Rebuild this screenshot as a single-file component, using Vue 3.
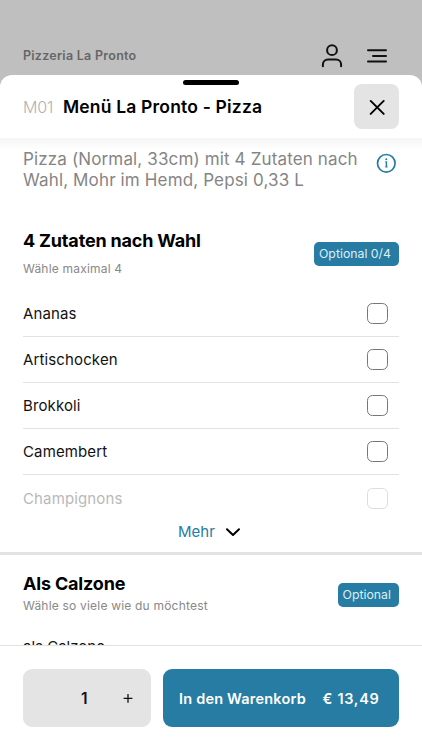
<script setup>
const toppings = [
  { name: 'Ananas' },
  { name: 'Artischocken' },
  { name: 'Brokkoli' },
  { name: 'Camembert' },
  { name: 'Champignons', faded: true },
]
</script>

<template>
  <div class="screen">
    <header class="topbar">
      <span class="shop">Pizzeria La Pronto</span>
      <svg class="user" width="22" height="24" viewBox="0 0 22 24" fill="none" stroke="#111" stroke-width="2" stroke-linecap="round">
        <circle cx="11" cy="6.2" r="4.9" />
        <path d="M1.9 22.2v-1.8a5 5 0 0 1 5-5h8.2a5 5 0 0 1 5 5v1.8" />
      </svg>
      <svg class="menu" width="22" height="16" viewBox="0 0 22 16" fill="none" stroke="#111" stroke-width="2" stroke-linecap="round">
        <path d="M2 2.3h18M7 7.9h13M2 13.5h18" />
      </svg>
    </header>

    <section class="sheet">
      <div class="handle"></div>
      <div class="sheet-head">
        <span class="code">M01</span>
        <h1>Menü La Pronto - Pizza</h1>
        <button class="close" aria-label="Schließen">
          <svg width="16" height="16" viewBox="0 0 16 16" fill="none" stroke="#000" stroke-width="1.9" stroke-linecap="round">
            <path d="M1.7 1.9l13 13M14.7 1.9l-13 13" />
          </svg>
        </button>
      </div>

      <div class="content">
        <div class="intro">
          <p>Pizza (Normal, 33cm) mit 4 Zutaten nach<br />Wahl, Mohr im Hemd, Pepsi 0,33 L</p>
          <svg width="20" height="20" viewBox="0 0 20 20" fill="none" stroke="#267ca3" stroke-width="1.7">
            <circle cx="10.3" cy="10.3" r="8.8" />
            <path d="M10.4 8.4v5.8" stroke-width="1.5" />
            <path d="M9 8.8h1.4M8.9 14h3" stroke-width="0.7" />
            <circle cx="10.3" cy="6.3" r="1" fill="#267ca3" stroke="none" />
          </svg>
        </div>

        <div class="group first">
          <div>
            <h2>4 Zutaten nach Wahl</h2>
            <p class="hint">Wähle maximal 4</p>
          </div>
          <span class="badge">Optional 0/4</span>
        </div>

        <ul>
          <li v-for="t in toppings" :key="t.name" :class="{ faded: t.faded }">
            <span>{{ t.name }}</span>
            <i class="box"></i>
          </li>
        </ul>

        <div class="more">
          <span>Mehr</span>
          <svg width="16" height="10" viewBox="0 0 16 10" fill="none" stroke="#000" stroke-width="2" stroke-linecap="round" stroke-linejoin="round">
            <path d="M2 2.2l6 5.8 6-5.8" />
          </svg>
        </div>

        <div class="group second">
          <div>
            <h2>Als Calzone</h2>
            <p class="hint">Wähle so viele wie du möchtest</p>
          </div>
          <span class="badge">Optional</span>
        </div>
        <div class="cut">als Calzone</div>
      </div>

      <footer>
        <div class="qty"><b>1</b>
          <svg width="10" height="10" viewBox="0 0 10 10" stroke="#111" stroke-width="1.3"><path d="M5 1v8.8M.6 5.4h8.8" /></svg>
        </div>
        <button class="cart"><span>In den Warenkorb</span><span class="price">€ 13,49</span></button>
      </footer>
    </section>
  </div>
</template>

<style>
body {
  background: #bfbfbf;
}
</style>

<style scoped>
* {
  box-sizing: border-box;
}
h1, h2, p, ul {
  margin: 0;
  padding: 0;
}
button {
  border: 0;
  padding: 0;
  font: inherit;
}
svg {
  display: block;
  flex: none;
}
.screen {
  height: 750px;
  display: flex;
  flex-direction: column;
  overflow: hidden;
  background: #bfbfbf;
  font-family: Inter, sans-serif;
  color: #111;
  white-space: nowrap;
}
.topbar {
  height: 75px;
  flex: none;
  display: flex;
  align-items: center;
  padding: 37px 34px 0 23px;
}
.shop {
  font-size: 12.5px;
  font-weight: 600;
  letter-spacing: 0.27px;
  color: #666;
  margin: -2px auto 0 0;
}
.user {
  margin-right: 23px;
}
.sheet {
  flex: 1;
  min-height: 0;
  display: flex;
  flex-direction: column;
  background: #fff;
  border-radius: 12px 12px 0 0;
}
.handle {
  width: 56px;
  height: 5px;
  margin: 5px auto -10px;
  flex: none;
  border-radius: 3px;
  background: #000;
}
.sheet-head {
  height: 63px;
  flex: none;
  display: flex;
  align-items: center;
  padding: 0 23px;
}
.code {
  width: 40px;
  font-size: 16px;
  font-weight: 300;
  letter-spacing: -0.1px;
  color: #b0b0b0;
}
h1 {
  font-size: 17.5px;
  font-weight: 600;
  letter-spacing: 0.18px;
  color: #000;
}
.close {
  width: 45px;
  height: 45px;
  margin-left: auto;
  display: grid;
  place-items: center;
  border-radius: 8px;
  background: #e4e4e4;
}
.content {
  flex: 1;
  min-height: 0;
  overflow: hidden;
  background: linear-gradient(#f5f5f5, #fff 12px);
}
.intro {
  display: flex;
  justify-content: space-between;
  height: 82px;
  padding: 11px 26px 0 23px;
}
.intro p {
  font-size: 17px;
  line-height: 20.5px;
  letter-spacing: 0.14px;
  color: #858585;
}
.intro svg {
  margin-top: 4px;
}
.group {
  display: flex;
  justify-content: space-between;
  padding: 0 23px;
}
.first {
  height: 71px;
  padding-top: 9px;
}
h2 {
  font-size: 18px;
  line-height: 24px;
  font-weight: 700;
  letter-spacing: -0.18px;
  color: #000;
}
.hint {
  font-size: 12px;
  line-height: 16px;
  letter-spacing: 0.2px;
  color: #888;
}
.first .hint {
  margin-top: 8px;
}
.badge {
  height: 24px;
  padding: 0 8px 0 5px;
  border-radius: 5px;
  background: #267ca3;
  color: #dceef6;
  font-size: 12.3px;
  line-height: 24px;
}
.first .badge {
  margin-top: 13px;
}
ul {
  list-style: none;
  padding: 0 23px;
}
li {
  height: 46px;
  display: flex;
  align-items: center;
  justify-content: space-between;
  padding-right: 11px;
  border-bottom: 1px solid #e2e2e2;
  font-size: 15px;
  letter-spacing: 0.13px;
}
li.faded {
  border: 0;
  color: #b9b9b9;
}
.box {
  width: 21px;
  height: 21px;
  border: 1px solid #777;
  border-radius: 5.5px;
}
.faded .box {
  border-color: #ddd;
}
.more {
  height: 31px;
  display: flex;
  align-items: center;
  padding: 0 0 10px 178px;
  gap: 10px;
  color: #267ca3;
  font-size: 15px;
}
.second {
  height: 85px;
  border-top: 3px solid #e2e2e2;
  padding-top: 17px;
}
.second .hint {
  margin-top: 2px;
}
.second .badge {
  margin-top: 11px;
}
.cut {
  padding-left: 23px;
  font-size: 15px;
  line-height: 20px;
}
footer {
  height: 105px;
  flex: none;
  display: flex;
  gap: 12px;
  padding: 23px 23px 0;
  border-top: 1px solid #e2e2e2;
  background: #fff;
}
.qty {
  width: 128px;
  height: 58px;
  display: flex;
  align-items: center;
  padding-left: 58px;
  border-radius: 9px;
  background: #e4e4e4;
  font-size: 15.5px;
}
.qty b {
  width: 42px;
  font-weight: 600;
}
.cart {
  flex: 1;
  height: 58px;
  display: flex;
  align-items: center;
  justify-content: space-between;
  padding: 0 19.5px 0 16px;
  border-radius: 9px;
  background: #267ca3;
  color: #fff;
  font-size: 14.5px;
  font-weight: 600;
  letter-spacing: 0.2px;
}
.price {
  letter-spacing: 0.7px;
}
</style>
